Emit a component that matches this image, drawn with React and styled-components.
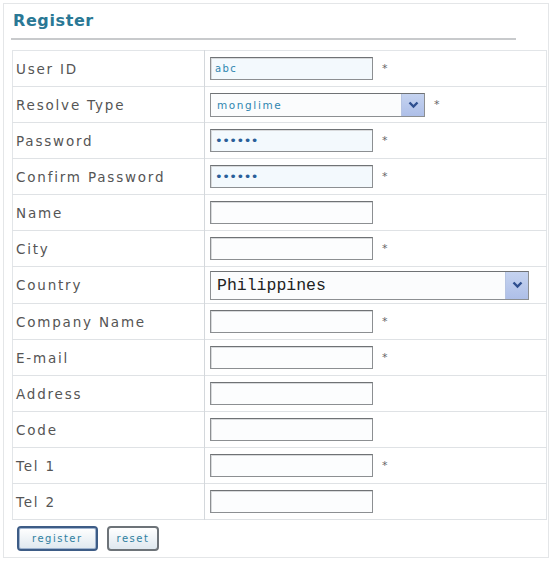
import styled, { createGlobalStyle } from "styled-components";

const GlobalStyle = createGlobalStyle`
  body {
    margin: 0;
    background: #fff;
    font-family: "DejaVu Sans", Verdana, sans-serif;
  }
`;

const Frame = styled.div`
  margin: 3px;
  width: 546px;
  height: 555px;
  border: 1px solid #e4e6e8;
  box-sizing: border-box;
  padding: 6px 0 0 7px;
`;

const Title = styled.h2`
  margin: 0 0 0 2px;
  font-size: 16px;
  font-weight: bold;
  letter-spacing: 0.6px;
  color: #2a7895;
  line-height: 22px;
`;

const Rule = styled.div`
  margin: 6px 0 0 0;
  width: 505px;
  border-top: 2px solid #c8cacc;
`;

const Table = styled.table`
  margin: 10px 0 0 1px;
  width: 535px;
  border-collapse: collapse;
  border: 1px solid #e2e5e8;
`;

const Row = styled.tr`
  height: ${(p) => (p.$tall ? 37 : 36)}px;
  border-bottom: 1px solid #dfe2e5;
`;

const LabelCell = styled.td`
  width: 188px;
  padding: 0 0 0 3px;
  border-right: 1px solid #d4d8dc;
  font-size: 13.5px;
  letter-spacing: 1.8px;
  color: #555;
  vertical-align: middle;
`;

const FieldCell = styled.td`
  padding: 0 0 0 5px;
  vertical-align: middle;
`;

const FieldLine = styled.div`
  display: flex;
  align-items: center;
  gap: 9px;
`;

const TextBox = styled.div`
  width: 163px;
  height: 23px;
  box-sizing: border-box;
  border: 1px solid #8c8f92;
  border-top-color: #6f7275;
  box-shadow: inset 1px 1px 0 #d8dadc;
  background: ${(p) => (p.$filled ? "#f3f9fd" : "#fcfdfe")};
  display: flex;
  align-items: center;
  padding-left: 4px;
  font-size: 10px;
  letter-spacing: 1.4px;
  color: #2f86b0;
`;

const Dots = styled.span`
  font-size: 13px;
  letter-spacing: -0.5px;
  color: #2a5f9a;
`;

const SelectBox = styled.div`
  width: ${(p) => p.$width}px;
  height: ${(p) => p.$height}px;
  box-sizing: border-box;
  border: 1px solid #8c8f92;
  border-top-color: #6f7275;
  background: #fbfcfd;
  display: flex;
  align-items: center;
  justify-content: space-between;
  padding-left: 6px;
`;

const SelectText = styled.span`
  font-size: 10.5px;
  letter-spacing: 1.6px;
  color: #2f86b0;
`;

const CountryText = styled.span`
  font-family: "Liberation Mono", "Courier New", monospace;
  font-size: 16.5px;
  color: #222;
`;

const ArrowButton = styled.div`
  width: 22px;
  align-self: stretch;
  background: linear-gradient(#c5d3f0, #aebfe8);
  border-left: 1px solid #b6c4e2;
  display: flex;
  align-items: center;
  justify-content: center;
`;

const Required = styled.span`
  font-size: 11px;
  color: #666;
`;

const Buttons = styled.div`
  display: flex;
  gap: 9px;
  margin: 6px 0 0 6px;
`;

const Button = styled.button`
  height: 25px;
  padding: 0 ${(p) => (p.$primary ? 13 : 8)}px;
  border: 2px solid ${(p) => (p.$primary ? "#3d5c86" : "#6d7378")};
  border-radius: 4px;
  background: linear-gradient(#ffffff, #dfe8ef);
  font-family: "DejaVu Sans", Verdana, sans-serif;
  font-size: 10px;
  letter-spacing: 1.5px;
  color: #2e7fa0;
  box-shadow: ${(p) => (p.$primary ? "inset 0 0 0 1px #9fb4d0" : "none")};
`;

function Chevron() {
  return (
    <svg width="11" height="8" viewBox="0 0 11 8">
      <path d="M1.5 1.5 L5.5 5.5 L9.5 1.5" fill="none" stroke="#2f4f8f" strokeWidth="2.4" />
    </svg>
  );
}

const fields = [
  { label: "User ID", kind: "text", value: "abc", req: true },
  { label: "Resolve Type", kind: "select", value: "monglime", req: true },
  { label: "Password", kind: "password", req: true },
  { label: "Confirm Password", kind: "password", req: true },
  { label: "Name", kind: "text" },
  { label: "City", kind: "text", req: true },
  { label: "Country", kind: "country", value: "Philippines" },
  { label: "Company Name", kind: "text", req: true },
  { label: "E-mail", kind: "text", req: true },
  { label: "Address", kind: "text" },
  { label: "Code", kind: "text" },
  { label: "Tel 1", kind: "text", req: true },
  { label: "Tel 2", kind: "text" },
];

function Field({ field }) {
  if (field.kind === "select") {
    return (
      <SelectBox $width={215} $height={24}>
        <SelectText>{field.value}</SelectText>
        <ArrowButton>
          <Chevron />
        </ArrowButton>
      </SelectBox>
    );
  }
  if (field.kind === "country") {
    return (
      <SelectBox $width={319} $height={29}>
        <CountryText>{field.value}</CountryText>
        <ArrowButton>
          <Chevron />
        </ArrowButton>
      </SelectBox>
    );
  }
  if (field.kind === "password") {
    return (
      <TextBox $filled>
        <Dots>••••••</Dots>
      </TextBox>
    );
  }
  return <TextBox $filled={!!field.value}>{field.value}</TextBox>;
}

export default function App() {
  return (
    <>
      <GlobalStyle />
      <Frame>
        <Title>Register</Title>
        <Rule />
        <Table>
          <tbody>
            {fields.map((f) => (
              <Row key={f.label} $tall={f.kind === "country"}>
                <LabelCell>{f.label}</LabelCell>
                <FieldCell>
                  <FieldLine>
                    <Field field={f} />
                    {f.req && <Required>*</Required>}
                  </FieldLine>
                </FieldCell>
              </Row>
            ))}
          </tbody>
        </Table>
        <Buttons>
          <Button $primary>register</Button>
          <Button>reset</Button>
        </Buttons>
      </Frame>
    </>
  );
}
